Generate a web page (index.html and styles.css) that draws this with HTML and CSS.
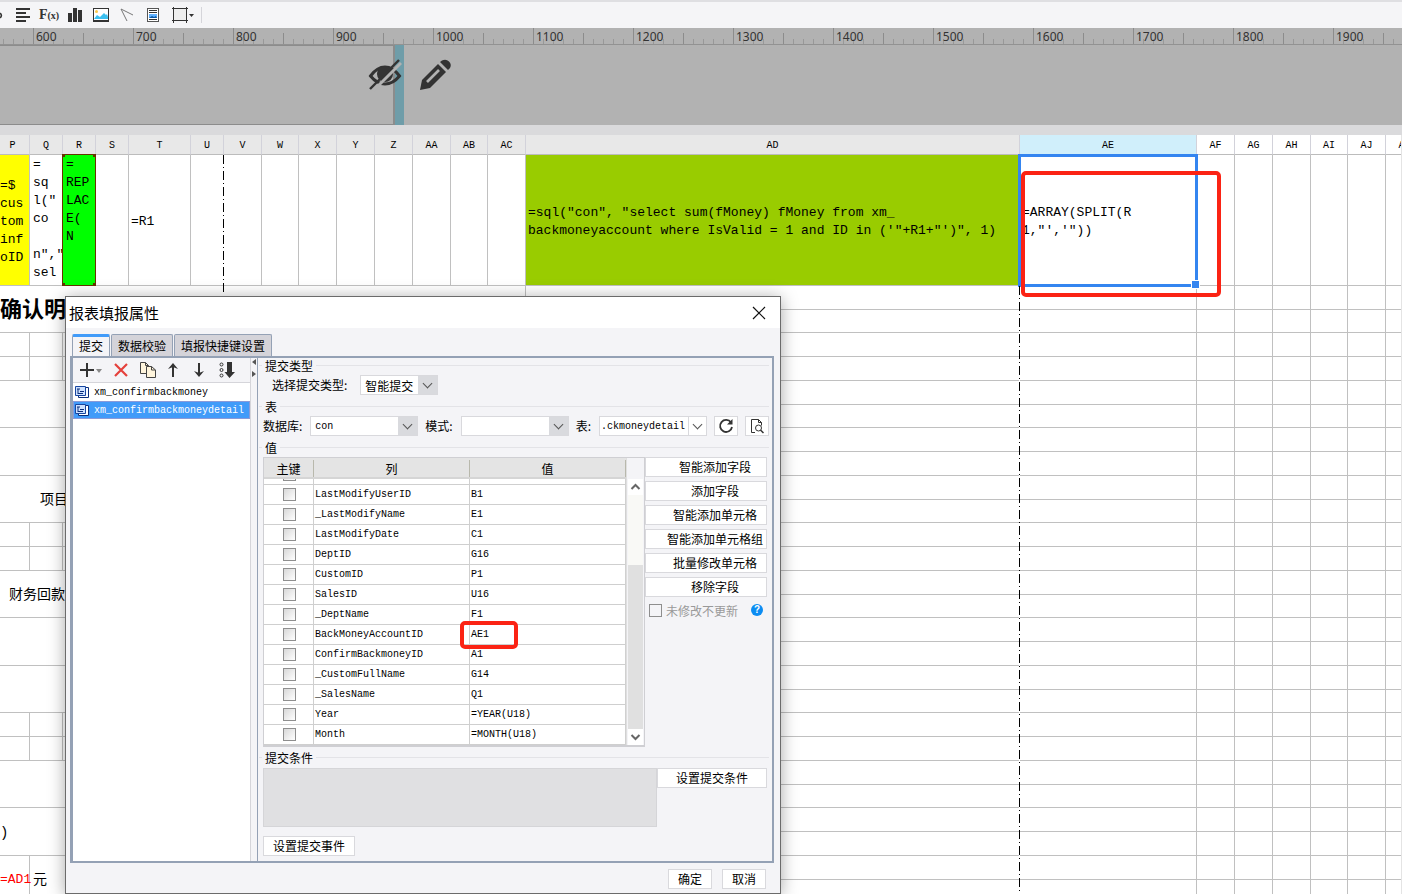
FILE: index.html
```html
<!DOCTYPE html>
<html lang="zh-CN">
<head>
<meta charset="utf-8">
<title>报表填报属性</title>
<link rel="stylesheet" href="styles.css">
</head>
<body>
<div class="app">
  <div class="toolbar">
    <button class="tool tool-cut" aria-label="链接"><svg width="10" height="16"><path d="M0 6.2a2.6 2.6 0 0 1 0 4.6" fill="none" stroke="#333" stroke-width="1.6"/></svg></button>
    <button class="tool" aria-label="对齐"><svg width="16" height="16"><path d="M1 2h14M1 6h10M1 10h14M1 14h10" stroke="#333" stroke-width="1.8"/></svg></button>
    <button class="tool formula" aria-label="公式">F<small>(x)</small></button>
    <button class="tool" aria-label="图表"><svg width="16" height="16"><path d="M1 6h4v9H1zM6 1h4v14H6zM11 3h4v12h-4z" fill="#333"/></svg></button>
    <button class="tool" aria-label="图片"><svg width="16" height="16"><rect x=".5" y="1.5" width="15" height="13" fill="#fff" stroke="#333"/><circle cx="3.5" cy="4.5" r="1.5" fill="#fbc849"/><path d="M1 12l3-4 3 2 4-4 2 2 1-1 1 3v2H1z" fill="#3cc0f0"/><path d="M0 13h16v2H0z" fill="#333"/></svg></button>
    <button class="tool" aria-label="斜线"><svg width="16" height="16"><path d="M14 8L2 2l6 12" fill="none" stroke="#777"/></svg></button>
    <button class="tool" aria-label="子报表"><svg width="16" height="16"><rect x="2.5" y="1.5" width="11" height="13" fill="#fff" stroke="#555"/><path d="M4 3.5h8M4 5.5h8M4 12.5h8" stroke="#333"/><path d="M4 7h8v4H4z" fill="#62b2ff"/><path d="M4 11l3-2 2 1 2-1 1 2z" fill="#0756a4"/></svg></button>
    <button class="tool tool-wide" aria-label="边框"><svg width="24" height="16"><rect x="2.5" y="1.5" width="13" height="12" fill="#eee" stroke="#333"/><path d="M2.5 0v16M15.5 0v16M1 1.5h16M1 13.5h16" stroke="#333"/><path d="M18 7h5l-2.5 3z" fill="#333"/></svg></button>
    <span class="divider"></span>
  </div>

  <div class="ruler" id="ruler"></div>

  <div class="stage">
    <div class="stage-page"></div>
    <div class="stage-edge"></div>
    <div class="stage-tools">
      <button class="tool" aria-label="隐藏"><svg width="34" height="34" viewBox="0 0 34 34"><path d="M2.500 18Q9 9 17 9t14.500 9Q25 26 17 26T2.500 18z" fill="none" stroke="#333" stroke-width="3"/><circle cx="17" cy="16" r="8" fill="#333"/><path d="M5 33L33 5" stroke="#b2b2b2" stroke-width="3"/><path d="M2 31L31 2" stroke="#333" stroke-width="2.4"/></svg></button>
      <button class="tool" aria-label="编辑"><svg width="34" height="34" viewBox="0 0 34 34"><path d="M2 32l2-10L20 6l8 8-16 16z" fill="#333"/><path d="M9 24L21 12" stroke="#b2b2b2" stroke-width="2.6"/><path d="M22 4l2-1.5q4-2 7 1t1 6.500L30 12z" fill="#333"/></svg></button>
    </div>
  </div>

  <div class="sheet">
    <table class="grid">
      <colgroup id="cols"></colgroup>
      <thead><tr id="heads"></tr></thead>
      <tbody id="rows">
        <tr class="row-top">
          <td class="yellow">=$<br>cus<br>tom<br>inf<br>oID</td>
          <td class="lines">=<br>sq<br>l("<br>co<br><br>n","<br>sel</td>
          <td class="lines green"><i></i>=<br>REP<br>LAC<br>E(<br>N</td>
          <td></td><td>=R1</td><td class="page-break"></td><td></td><td></td><td></td><td></td><td></td><td></td><td></td><td></td>
          <td class="olive">=sql("con", "select sum(fMoney) fMoney from xm_<br>backmoneyaccount where IsValid = 1 and ID in ('"+R1+"')", 1)</td>
          <td class="selected">=ARRAY(SPLIT(R<br>1,"','"))</td>
          <td></td><td></td><td></td><td></td><td></td><td></td>
        </tr>
      </tbody>
    </table>
  </div>

  <div class="mark mark-cell"></div>

  <section class="dialog" role="dialog" aria-labelledby="dlg-title">
    <header class="dialog-head">
      <h1 id="dlg-title">报表填报属性</h1>
      <button class="bare" aria-label="关闭"><svg width="14" height="14"><path d="M1 1l12 12M13 1L1 13" stroke="#111" stroke-width="1.2"/></svg></button>
    </header>
    <div class="dialog-body">
      <nav class="tabs">
        <button class="tab active">提交</button>
        <button class="tab">数据校验</button>
        <button class="tab">填报快捷键设置</button>
      </nav>
      <div class="panel">
        <aside class="side">
          <div class="side-tools">
            <button class="bare" aria-label="添加"><svg width="24" height="16"><path d="M8 1v14M1 8h14" stroke="#333" stroke-width="2"/><path d="M17 7h6l-3 4z" fill="#888"/></svg></button>
            <button class="bare" aria-label="删除"><svg width="16" height="16"><path d="M2 2l12 12M14 2L2 14" stroke="#e5413c" stroke-width="2.2"/></svg></button>
            <button class="bare" aria-label="复制"><svg width="18" height="16"><path d="M1.5.5h5l3 3v8h-8z" fill="#fff5dd" stroke="#444"/><path d="M6.500.5v3h3" fill="none" stroke="#444"/><path d="M7.5 4.5h5l4 3.500v7.500h-9z" fill="#fff5dd" stroke="#444"/><path d="M12.500 4.500v3.500h4" fill="none" stroke="#444"/></svg></button>
            <button class="bare" aria-label="上移"><svg width="12" height="16"><path d="M6 15V4" stroke="#333" stroke-width="2"/><path d="M1 7l5-6 5 6-5-2z" fill="#333"/></svg></button>
            <button class="bare" aria-label="下移"><svg width="12" height="16"><path d="M6 1v11" stroke="#333" stroke-width="2"/><path d="M1 9l5 6 5-6-5 2z" fill="#333"/></svg></button>
            <button class="bare" aria-label="排序"><svg width="16" height="16"><g fill="none" stroke="#333"><circle cx="2.5" cy="2.5" r="1.5"/><circle cx="2.5" cy="8" r="1.5"/><circle cx="2.5" cy="13.500" r="1.5"/></g><path d="M8 0h5v10h3l-5.500 6L5.500 10H8z" fill="#333"/></svg></button>
          </div>
          <ul class="side-list">
            <li><svg width="16" height="14"><path d="M4.5 2.5h10v10h-10z" fill="#fff" stroke="#0b2f7c"/><path d="M1.5 1.5h10v9h-10z" fill="#cde1ff" stroke="#1645a0"/><path d="M3 4h3M4 4v5M6 6.500h4M4 8.500h5" stroke="#0b2f7c"/></svg>xm_confirmbackmoney</li>
            <li class="current"><svg width="16" height="14"><path d="M4.5 2.5h10v10h-10z" fill="#fff" stroke="#0b2f7c"/><path d="M1.5 1.5h10v9h-10z" fill="#cde1ff" stroke="#1645a0"/><path d="M3 4h3M4 4v5M6 6.500h4M4 8.500h5" stroke="#0b2f7c"/></svg>xm_confirmbackmoneydetail</li>
          </ul>
        </aside>
        <div class="splitter"><svg width="6" height="20"><path d="M5 1v6L1 4zM1 13v6l4-3z" fill="#555"/></svg></div>
        <div class="main">
          <h2 class="legend">提交类型</h2>
          <div class="line line-type">
            <label for="type">选择提交类型:</label>
            <span class="combo combo-type"><select id="type"><option>智能提交</option></select><span class="arrow"></span></span>
          </div>
          <h2 class="legend">表</h2>
          <div class="line">
            <label for="db">数据库:</label>
            <span class="combo combo-db"><select id="db"><option>con</option></select><span class="arrow"></span></span>
            <label for="schema">模式:</label>
            <span class="combo combo-db"><select id="schema"><option></option></select><span class="arrow"></span></span>
            <label for="tbl">表:</label>
            <span class="combo combo-table"><input id="tbl" value=".ckmoneydetail"><span class="arrow light"></span></span>
            <button class="btn square" aria-label="刷新"><svg width="16" height="16"><path d="M13 4.500A6 6 0 1 0 14 9" fill="none" stroke="#333" stroke-width="1.8"/><path d="M14.5 1v5.500H9z" fill="#333"/></svg></button>
            <button class="btn square" aria-label="预览"><svg width="16" height="16"><path d="M6 14.500H2.500v-13h7l3 3v3" fill="none" stroke="#333"/><path d="M9.500 1.500v3h3" fill="none" stroke="#333"/><circle cx="9.5" cy="10" r="3" fill="none" stroke="#333"/><path d="M11.500 12l3 3" stroke="#333" stroke-width="1.5"/></svg></button>
          </div>
          <h2 class="legend">值</h2>
          <div class="values">
            <div class="fields">
              <div class="fields-table">
                <div class="fields-head"><span>主键</span><span>列</span><span>值</span></div>
                <div class="fields-clip">
                  <table class="fields-grid">
                    <colgroup><col class="c-key"><col class="c-name"><col></colgroup>
                    <tbody id="fields"></tbody>
                  </table>
                </div>
              </div>
              <div class="scroll">
                <svg width="15" height="16"><path d="M3.5 10l4-4 4 4" fill="none" stroke="#666" stroke-width="2"/></svg>
                <div class="track"><div class="thumb"></div></div>
                <svg width="15" height="16"><path d="M3.5 6l4 4 4-4" fill="none" stroke="#666" stroke-width="2"/></svg>
              </div>
            </div>
            <div class="actions">
              <button class="btn indent">智能添加字段</button>
              <button class="btn indent">添加字段</button>
              <button class="btn indent">智能添加单元格</button>
              <button class="btn indent">智能添加单元格组</button>
              <button class="btn indent">批量修改单元格</button>
              <button class="btn indent">移除字段</button>
              <div class="check-line"><input type="checkbox" id="skip" class="check plain" disabled><label for="skip">未修改不更新</label><button class="help" aria-label="帮助">?</button></div>
            </div>
          </div>
          <h2 class="legend">提交条件</h2>
          <div class="condition">
            <textarea aria-label="提交条件" disabled></textarea>
            <button class="btn btn-cond">设置提交条件</button>
          </div>
          <button class="btn btn-event">设置提交事件</button>
        </div>
      </div>
      <footer class="dialog-foot">
        <button class="btn">确定</button>
        <button class="btn">取消</button>
      </footer>
    </div>
  </section>
  <div class="mark mark-value"></div>
</div>
<script src="script.js"></script>
</body>
</html>
```

FILE: styles.css
```css
* { box-sizing: border-box; }

body {
  margin: 0;
  font-family: "Liberation Mono", "Noto Sans CJK SC", monospace;
  font-size: 13px;
  color: #000;
  background: #fff;
}

button, input, select, textarea {
  font: inherit;
  color: inherit;
  margin: 0;
  padding: 0;
}

h1, h2, ul { margin: 0; padding: 0; font-weight: normal; }
svg { display: block; flex: none; }

.app {
  position: relative;
  display: flex;
  flex-direction: column;
  height: 100vh;
  overflow: hidden;
}

.bare, .tool { border: 0; background: none; display: flex; align-items: center; justify-content: center; }

/* Toolbar */
.toolbar {
  flex: none;
  display: flex;
  align-items: center;
  height: 28px;
  border-top: 2px solid #dfdfe2;
  background: #f5f5f7;
}
.toolbar .tool { width: 26px; height: 26px; }
.toolbar .tool-cut { width: 10px; }
.toolbar .tool-wide { width: 34px; }
.toolbar .formula { font-family: "Liberation Serif", serif; font-size: 14px; font-weight: bold; color: #333; }
.formula small { font-size: 10px; }
.divider { width: 1px; height: 16px; margin-left: 1px; background: #d5d5da; }

/* Ruler */
.ruler {
  flex: none;
  display: flex;
  height: 17px;
  overflow: hidden;
  background: #b2b2b2;
  border-bottom: 1px solid #929292;
}
.ruler span {
  flex: none;
  width: 100px;
  height: 16px;
  padding-left: 3px;
  font: 12px/18px "Noto Sans", sans-serif;
  color: #333;
  background:
    linear-gradient(#8c8c8c, #8c8c8c) 0 0 / 1px 16px no-repeat,
    linear-gradient(#8c8c8c, #8c8c8c) 50px 5px / 1px 11px no-repeat,
    repeating-linear-gradient(90deg, #989898 0 1px, transparent 1px 10px) 0 11px / 100px 5px no-repeat;
}
.ruler .lead { width: 33px; background-position: -67px 0, -17px 5px, -67px 11px; }

/* Banner above the sheet */
.stage {
  flex: none;
  position: relative;
  display: flex;
  height: 90px;
  background: #b2b2b2;
  border-bottom: 10px solid #dadadc;
}
.stage-page { width: 395px; border: 1px solid #8c8c8c; border-left: 0; border-right-width: 2px; }
.stage-edge { width: 9px; background: #6f9da9; }
.stage-tools { position: absolute; left: 368px; top: 13px; display: flex; gap: 16px; }

/* Sheet */
.sheet { flex: 1; min-height: 0; overflow: hidden; border-right: 1px solid #e4e4e4; }
.grid {
  table-layout: fixed;
  width: 1424px;
  border-collapse: separate;
  border-spacing: 0;
}
.grid th {
  height: 20px;
  padding: 3px 0 0;
  font-size: 10px;
  font-weight: normal;
  line-height: 16px;
  background: #e8e8e8;
  border-right: 1px solid #d2d2da;
  border-bottom: 1px solid #bcbcbc;
}
.grid th:first-child { padding-right: 4px; }
.grid th.on { background: #d0effb; }
.grid th.on ~ th { background: #fff; }
.grid td {
  padding: 0 0 0 3px;
  height: 24px;
  line-height: 18px;
  white-space: nowrap;
  vertical-align: middle;
  border-right: 1px solid #c0c0c0;
  border-bottom: 1px solid #c0c0c0;
}
.grid tr.short td { height: 23px; }
.grid .row-top td { height: 131px; padding-top: 3px; padding-left: 2px; }
.grid td[rowspan] { height: auto; padding-top: 2px; line-height: 20px; font-size: 14px; }
.grid td.title { padding: 6px 0 0; line-height: 24px; font-size: 22px; font-weight: bold; }
.grid td.red { padding-left: 0; font-size: 13px; text-align: right; direction: ltr; color: #f00; }
.grid td.project { padding-left: 40px; }
.grid td.finance { padding-left: 9px; }
.grid td.tail { padding-left: 0; }
.grid .row-top .lines { vertical-align: top; padding-top: 1px; padding-left: 3px; }
.grid .row-top .yellow { padding-left: 0; background: #ff0; }
.grid .row-top .olive { background: #9c0; }
.grid .row-top .green { position: relative; background: #0f0; }
.green i {
  position: absolute;
  inset: -1px;
  border: 1px solid #630;
  background:
    linear-gradient(#630, #630) 0 0 / 2px 2px no-repeat,
    linear-gradient(#630, #630) 100% 0 / 2px 2px no-repeat,
    linear-gradient(#630, #630) 0 100% / 2px 2px no-repeat,
    linear-gradient(#630, #630) 100% 100% / 2px 2px no-repeat;
}
.grid .selected { position: relative; }
.selected::before {
  content: "";
  position: absolute;
  inset: -1px -2px -2px -2px;
  border: 3px solid #3485f0;
}
.selected::after {
  content: "";
  position: absolute;
  right: -4px;
  bottom: -4px;
  width: 7px;
  height: 7px;
  border: 1px solid #fff;
  background: #3485f0;
}
.page-break, .grid td.break-below { position: relative; }
.page-break::after, .break-below::after {
  content: "";
  position: absolute;
  right: -1px;
  top: 0;
  width: 1px;
  height: 139px;
  background: repeating-linear-gradient(#000 0 9px, #fff 9px 12px, #000 12px 13px, #fff 13px 16px);
}
.break-below::after { height: 610px; }

/* Red highlight frames */
.mark { position: absolute; border: 4px solid #fb2314; border-radius: 5px; pointer-events: none; }
.mark-cell { left: 1021px; top: 171px; width: 200px; height: 126px; }
.mark-value { left: 460px; top: 621px; width: 58px; height: 28px; }

/* Dialog */
.dialog {
  position: absolute;
  left: 65px;
  top: 296px;
  width: 716px;
  border: 1px solid #6b6b6b;
  background: #f4f4f7;
  box-shadow: 0 2px 16px rgba(0, 0, 0, .35);
  font-family: "Noto Sans CJK SC", sans-serif;
  font-size: 12px;
}
.dialog-head {
  display: flex;
  align-items: center;
  justify-content: space-between;
  height: 31px;
  padding: 0 14px 0 3px;
  background: #fff;
}
.dialog-head h1 { font-size: 15px; line-height: 20px; }
.dialog-body { padding: 6px 6px 3px 4px; }

.tabs { display: flex; align-items: flex-end; gap: 1px; padding-left: 2px; }
.tab {
  height: 22px;
  padding: 0 6px;
  line-height: 20px;
  background: #d4d3d9;
  border: 1px solid #94a1b5;
  border-bottom: 0;
  border-radius: 2px 2px 0 0;
}
.tab.active { padding: 0 6px 2px; line-height: 16px; background: #f4f4f7; border-top: 3px solid #419bf9; }

.panel { display: flex; border: 2px solid #94a1b5; border-left-width: 3px; }
.side { display: flex; flex-direction: column; width: 178px; border-right: 1px solid #d5d5da; }
.side-tools { display: flex; align-items: center; gap: 10px; height: 24px; padding-left: 6px; }
.side-tools .bare:nth-child(n+5) { margin-left: 4px; }
.side-list {
  flex: 1;
  list-style: none;
  background: #fff;
  border-top: 1px solid #d5d5da;
  font-family: "Liberation Mono", monospace;
  font-size: 10px;
}
.side-list li { display: flex; align-items: center; gap: 4px; height: 18px; padding-left: 1px; }
.side-list .current { background: #419bf9; color: #fff; border: 1px solid #8a9ad8; padding-left: 0; }
.splitter { width: 7px; border-right: 1px solid #94a1b5; }

.main { flex: 1; padding: 0 3px 5px 5px; min-width: 0; }
.legend {
  display: flex;
  align-items: center;
  gap: 3px;
  height: 15px;
  font-size: 12px;
  line-height: 15px;
  margin-left: -4px;
}
.legend::before, .legend::after { content: ""; height: 1px; background: #e3e3e7; }
.legend::before { width: 3px; }
.legend::after { flex: 1; }
.line { display: flex; align-items: flex-start; height: 26px; padding-top: 2px; gap: 7px; }
.line label { flex: none; padding-right: 1px; line-height: 19px; }
.line-type { padding-left: 9px; gap: 12px; }
.combo { display: flex; height: 20px; background: #fff; border: 1px solid #d9d9dd; }
.combo select, .combo input {
  appearance: none;
  flex: 1;
  min-width: 0;
  width: 0;
  padding: 0 0 0 4px;
  border: 0;
  border-radius: 0;
  outline: 0;
  background: #fff;
}
.combo-db select, .combo-table input { font-family: "Liberation Mono", monospace; font-size: 10px; }
.combo .arrow { display: flex; align-items: center; justify-content: center; width: 19px; background: #d9dade; }
.combo .arrow.light { background: #fff; border-left: 1px solid #d9d9dd; }
.arrow::before {
  content: "";
  width: 6px;
  height: 6px;
  margin-bottom: 3px;
  border: solid #555;
  border-width: 0 1px 1px 0;
  transform: rotate(45deg);
}
.combo-type { width: 78px; }
.combo-db { width: 108px; }
.combo-table { width: 108px; }
.combo .arrow.light { width: 18px; }
.combo-table input { padding-left: 1px; }

.btn {
  height: 20px;
  display: flex;
  align-items: center;
  justify-content: center;
  line-height: 18px;
  background: #fff;
  border: 1px solid #d9d9dd;
  white-space: nowrap;
}
.square { width: 24px; flex: none; }

.values { display: flex; margin-top: 2px; height: 290px; }
.fields { display: flex; width: 382px; border: 1px solid #cfcfd3; border-bottom-width: 2px; }
.fields-table { flex: 1; display: flex; flex-direction: column; min-width: 0; }
.fields-head {
  display: grid;
  grid-template-columns: 50px 156px 1fr;
  height: 21px;
  padding-top: 2px;
  background: #e4e4e4;
  border-bottom: 2px solid #d5d5d5;
  line-height: 17px;
  text-align: center;
}
.fields-head span { border-right: 1px solid #b8b8ac; }
.fields-clip {
  flex: 1;
  min-height: 0;
  overflow: hidden;
  display: flex;
  flex-direction: column;
  justify-content: flex-end;
  background: #fff;
  border-right: 1px solid #d0d0d0;
}
.fields-grid {
  flex: none;
  width: 100%;
  table-layout: fixed;
  border-collapse: separate;
  border-spacing: 0;
  font-family: "Liberation Mono", monospace;
  font-size: 10px;
}
.c-key { width: 50px; }
.c-name { width: 156px; }
.fields-grid td { height: 20px; padding: 0 0 0 1px; line-height: 14px; border-bottom: 1px solid #cfcfcf; border-right: 1px solid #cfcfcf; white-space: nowrap; }
.fields-grid td:last-child { border-right: 0; }
.check {
  appearance: none;
  display: block;
  width: 13px;
  height: 13px;
  border: 1px solid #8e8e8e;
  border-radius: 0;
  background: linear-gradient(135deg, #d8d8d8, #fff);
}
.fields-grid .check { margin: 0 auto; }
.check.plain { background: #f4f4f7; }
.scroll { display: flex; flex-direction: column; width: 18px; padding: 21px 1px 0; background: #f4f4f7; border-left: 1px solid #dfdfdf; }
.scroll svg { background: #fff; }
.track { flex: 1; background: #e0e0e0; }
.thumb { height: 30%; background: #f9f9f6; }
.actions { display: flex; flex-direction: column; gap: 4px; width: 122px; }
.indent { padding-left: 18px; }
.check-line { display: flex; align-items: center; gap: 4px; height: 18px; padding-left: 4px; color: #999; }
.help {
  width: 12px;
  height: 12px;
  margin-left: 9px;
  border: 0;
  border-radius: 50%;
  background: #0b8cf2;
  color: #fff;
  font: bold 10px/12px "Liberation Sans", sans-serif;
}

.condition { display: flex; align-items: flex-start; margin: 3px 0 9px; }
.condition textarea { width: 394px; height: 59px; resize: none; background: #e0e0e2; border: 1px solid #d5d5d8; border-radius: 0; }
.values + .legend { margin-top: 3px; }
.btn-cond { width: 110px; }
.btn-event { width: 92px; }
.dialog-foot { display: flex; justify-content: flex-end; gap: 10px; padding: 6px 8px 1px 0; }
.dialog-foot .btn { width: 44px; }
```

FILE: script.js
```js
const columns = [
  ["P", 30], ["Q", 33], ["R", 33], ["S", 33], ["T", 62], ["U", 33], ["V", 38], ["W", 37],
  ["X", 38], ["Y", 38], ["Z", 38], ["AA", 38], ["AB", 37], ["AC", 38], ["AD", 494],
  ["AE", 177], ["AF", 38], ["AG", 38], ["AH", 38], ["AI", 37], ["AJ", 38], ["AK", 38]
];
document.getElementById("cols").innerHTML = columns.map(c => `<col style="width:${c[1]}px">`).join("");
document.getElementById("heads").innerHTML = columns
  .map(c => `<th${c[0] === "AE" ? ' class="on"' : ""}>${c[0]}</th>`).join("");

// Columns P to AC hold cells merged over two rows; the rest is plain grid.
const wide = (cls, text) => `<td class="${cls}" colspan="14" rowspan="2">${text}</td>`;
const merged = {
  2: wide("title", "确认明细"),
  6: wide("", ""),
  8: wide("", ""),
  10: wide("project", "项目"),
  14: wide("finance", "财务回款"),
  16: wide("", ""),
  18: wide("", ""),
  22: wide("", ""),
  24: wide("tail", ")"),
  26: '<td class="red" rowspan="2">=AD1</td><td colspan="13" rowspan="2">元</td>'
};
let html = "";
for (let n = 2; n <= 27; n++) {
  let left = merged[n] || "";
  if (!left && !merged[n - 1]) left = "<td></td>".repeat(14);
  const ad = n === 2 ? '<td class="break-below"></td>' : "<td></td>";
  html += `<tr${n % 4 === 3 ? ' class="short"' : ""}>${left}${ad}${"<td></td>".repeat(7)}</tr>`;
}
document.getElementById("rows").insertAdjacentHTML("beforeend", html);

let ruler = '<span class="lead"></span>';
for (let v = 600; v <= 1900; v += 100) ruler += `<span>${v}</span>`;
document.getElementById("ruler").innerHTML = ruler;

const fields = [
  ["_", ""], ["LastModifyUserID", "B1"], ["_LastModifyName", "E1"], ["LastModifyDate", "C1"],
  ["DeptID", "G16"], ["CustomID", "P1"], ["SalesID", "U16"], ["_DeptName", "F1"],
  ["BackMoneyAccountID", "AE1"], ["ConfirmBackmoneyID", "A1"], ["_CustomFullName", "G14"],
  ["_SalesName", "Q1"], ["Year", "=YEAR(U18)"], ["Month", "=MONTH(U18)"]
];
document.getElementById("fields").innerHTML = fields.map(f =>
  `<tr><td><input type="checkbox" class="check" aria-label="${f[0]}"></td><td>${f[0]}</td><td>${f[1]}</td></tr>`
).join("");
```
